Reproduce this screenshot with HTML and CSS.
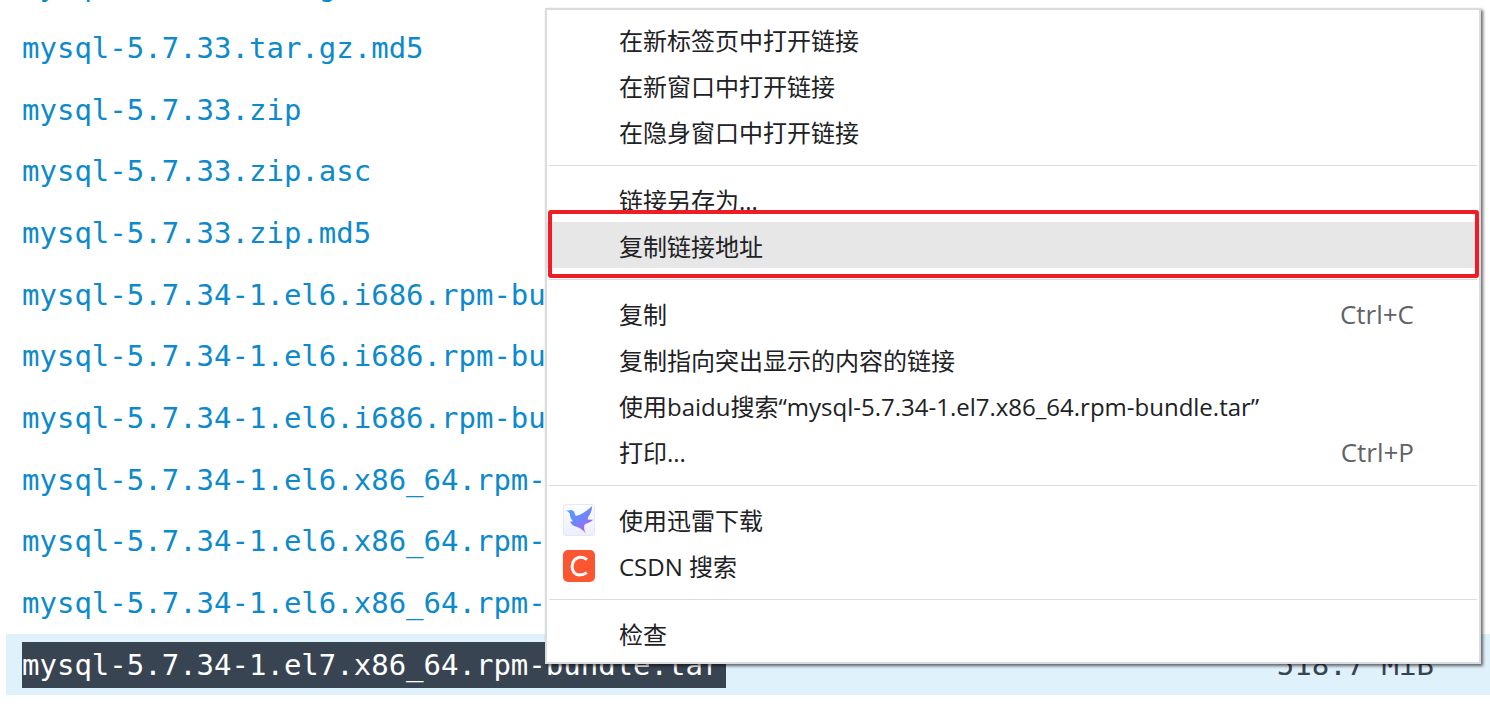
FILE: index.html
```html
<!DOCTYPE html>
<html lang="zh-CN">
<head>
<meta charset="utf-8">
<title>mysql-5.7</title>
<link rel="stylesheet" href="styles.css">
</head>
<body>
<main class="listing">
  <ul class="files">
    <li class="file"><a class="file-link" href="#">mysql-5.7.33.tar.gz.asc</a></li>
    <li class="file"><a class="file-link" href="#">mysql-5.7.33.tar.gz.md5</a></li>
    <li class="file"><a class="file-link" href="#">mysql-5.7.33.zip</a></li>
    <li class="file"><a class="file-link" href="#">mysql-5.7.33.zip.asc</a></li>
    <li class="file"><a class="file-link" href="#">mysql-5.7.33.zip.md5</a></li>
    <li class="file"><a class="file-link" href="#">mysql-5.7.34-1.el6.i686.rpm-bundle.tar</a></li>
    <li class="file"><a class="file-link" href="#">mysql-5.7.34-1.el6.i686.rpm-bundle.tar.asc</a></li>
    <li class="file"><a class="file-link" href="#">mysql-5.7.34-1.el6.i686.rpm-bundle.tar.md5</a></li>
    <li class="file"><a class="file-link" href="#">mysql-5.7.34-1.el6.x86_64.rpm-bundle.tar</a></li>
    <li class="file"><a class="file-link" href="#">mysql-5.7.34-1.el6.x86_64.rpm-bundle.tar.asc</a></li>
    <li class="file"><a class="file-link" href="#">mysql-5.7.34-1.el6.x86_64.rpm-bundle.tar.md5</a></li>
    <li class="file file-active"><a class="file-link file-selected" href="#">mysql-5.7.34-1.el7.x86_64.rpm-bundle.tar</a><span class="size">518.7 MiB</span></li>
  </ul>
</main>

<div class="menu" role="menu">
  <button class="item" role="menuitem"><span class="icon"></span><span class="label">在新标签页中打开链接</span></button>
  <button class="item" role="menuitem"><span class="icon"></span><span class="label">在新窗口中打开链接</span></button>
  <button class="item" role="menuitem"><span class="icon"></span><span class="label">在隐身窗口中打开链接</span></button>
  <hr class="separator">
  <button class="item" role="menuitem"><span class="icon"></span><span class="label">链接另存为...</span></button>
  <button class="item item-marked" role="menuitem"><span class="icon"></span><span class="label">复制链接地址</span></button>
  <hr class="separator">
  <button class="item" role="menuitem"><span class="icon"></span><span class="label">复制</span><span class="shortcut">Ctrl+C</span></button>
  <button class="item" role="menuitem"><span class="icon"></span><span class="label">复制指向突出显示的内容的链接</span></button>
  <button class="item" role="menuitem"><span class="icon"></span><span class="label">使用baidu搜索“mysql-5.7.34-1.el7.x86_64.rpm-bundle.tar”</span></button>
  <button class="item" role="menuitem"><span class="icon"></span><span class="label">打印...</span><span class="shortcut">Ctrl+P</span></button>
  <hr class="separator">
  <button class="item" role="menuitem">
    <svg class="icon" viewBox="0 0 32 32" aria-hidden="true">
      <defs>
        <linearGradient id="tile" x1="0" y1="0" x2="0" y2="1"><stop offset="0" stop-color="#fdfdff"/><stop offset="1" stop-color="#eceffd"/></linearGradient>
        <linearGradient id="bird" x1="0.1" y1="0.1" x2="0.75" y2="1"><stop offset="0" stop-color="#4aa0fb"/><stop offset="0.5" stop-color="#6e86fb"/><stop offset="1" stop-color="#b05cf6"/></linearGradient>
      </defs>
      <rect x="0.5" y="0.5" width="31" height="31" rx="2.500" fill="url(#tile)" stroke="#e6e8f5"/>
      <path fill="url(#bird)" d="M2.300 6.400 6 6.600C8.200 5.300 10.800 6.200 11.600 9 12.100 11 12.700 12.200 14 11.800 19 10 24.500 6.600 29.200 2 28.800 6.500 27.800 9.600 25.200 13L24.600 15.400 30 15.800C28 18 25.500 19.200 22.400 19.800 20.600 22 20.600 25 22.700 29.400 20 26 17 23.600 13.400 22.700 9.800 21.700 8 20 7.200 17.400L10 17.200C7.800 15.300 7 12.800 6.900 9.800 6.300 7.900 4.600 7 2.300 6.400Z"/>
    </svg>
    <span class="label">使用迅雷下载</span></button>
  <button class="item" role="menuitem">
    <svg class="icon" viewBox="0 0 32 32" aria-hidden="true">
      <rect width="32" height="32" rx="5" fill="#fc5531"/>
      <path fill="none" stroke="#fff" stroke-width="3" d="M24 9.600C22 7.900 19.800 7.200 17.300 7.300 12.400 7.500 9.200 11.500 9.100 16.500 9 21.400 11.800 24.900 16.500 24.900 19.300 24.900 21.600 24.200 23.800 22.600"/>
    </svg>
    <span class="label">CSDN 搜索</span></button>
  <hr class="separator">
  <button class="item" role="menuitem"><span class="icon"></span><span class="label">检查</span></button>
</div>
</body>
</html>
```

FILE: styles.css
```css
* {
  box-sizing: border-box;
}

body {
  margin: 0;
  background: #fff;
  overflow: hidden;
}

.listing {
  margin-top: -45px;
  padding-left: 6px;
  font-family: "DejaVu Sans Mono", monospace;
  font-size: 29px;
}

.files {
  margin: 0;
  padding: 0;
  list-style: none;
}

.file {
  display: flex;
  align-items: center;
  justify-content: space-between;
  height: 62px;
  padding: 0 56px 0 16px;
  white-space: nowrap;
}

.file:nth-child(3n) {
  height: 61px;
}

.file-link {
  color: #0d8acb;
  line-height: 46px;
  text-decoration: none;
}

.file-active {
  background: #dff1fb;
}

.file-selected {
  padding-right: 6px;
  background: #384452;
  color: #fff;
}

.size {
  color: #384452;
}

.menu {
  position: absolute;
  top: 8px;
  left: 545px;
  right: 9px;
  padding: 6px 0;
  border: 2px solid #dadce0;
  background: #fff;
  box-shadow: 2px 2px 3px rgba(0, 0, 0, 0.6);
}

.item {
  position: relative;
  display: flex;
  align-items: center;
  gap: 24px;
  width: 100%;
  height: 46px;
  padding: 2px 65px 0 16px;
  border: 0;
  background: none;
  color: #202124;
  font-family: "Open Sans", "Noto Sans CJK SC", sans-serif;
  font-size: 24px;
  line-height: 36px;
  text-align: left;
  white-space: nowrap;
}

.icon {
  flex: none;
  width: 32px;
  height: 32px;
}

.label {
  flex: 1;
  padding-top: 2px;
}

.shortcut {
  color: #5f6368;
  font-size: 26px;
}

.item-marked {
  background: #e7e7e7;
}

.item-marked::after {
  content: "";
  position: absolute;
  z-index: 1;
  inset: -12px 0 -10px 1px;
  border: 4px solid #ee1c25;
  border-radius: 3px;
}

.separator {
  height: 1px;
  margin: 11px 2px 10px;
  border: 0;
  background: #dadce0;
}
```
